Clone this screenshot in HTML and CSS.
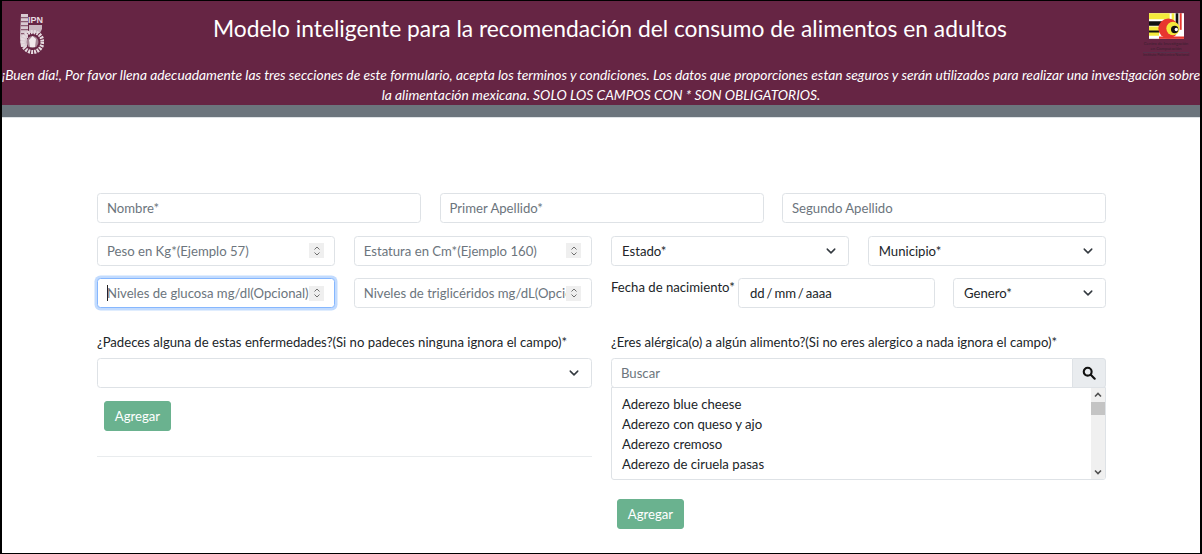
FILE: index.html
```html
<!DOCTYPE html>
<html lang="es">
<head>
<meta charset="utf-8">
<title>Modelo inteligente</title>
<link rel="stylesheet" href="styles.css">
</head>
<body>
<div class="frame">
  <header class="hero">
    <div class="hero-top">
      <svg class="logo-ipn" viewBox="0 0 26 41" aria-hidden="true">
        <path d="M3 1h7v24H2zM2 25h7v9H3z" fill="#d9cbd2"/>
        <path d="M3 4h7v1.200H3zM3 8h7v1.200H3zM3 12h7v1.200H3zM3 16h7v1.200H3zM3 20h7v1.200H3z" fill="#8a5c72"/>
        <text class="ipn-text" x="17.500" y="10">IPN</text>
        <path d="M11 12h13v4l-2 4H11z" fill="#c9b5bf"/>
        <circle cx="14.500" cy="29" r="10" fill="none" stroke="#e6dbe0" stroke-width="4" stroke-dasharray="2 1"/>
        <circle cx="14.500" cy="29" r="6" fill="#a58494"/>
        <path d="M11 27l3.500-4 3.500 3-1 8h-5z" fill="#f1e9ec"/>
      </svg>
      <h1 class="title">Modelo inteligente para la recomendación del consumo de alimentos en adultos</h1>
      <div class="logo-cic">
        <svg class="logo-cic-mark" viewBox="0 0 105 77" aria-hidden="true">
          <rect width="105" height="77" fill="#fff"/>
          <path d="M0 0h62v18H0zM0 40h30v28H0zM68 0h8v30h-8z" fill="#f4ea3c"/>
          <path d="M0 24h40v14H0zM0 52h30v6H0zM80 0h8v40h-8z" fill="#111"/>
          <path d="M92 0h6v50h-6z" fill="#e8372f"/>
          <path d="M30 70h75v7H30z" fill="#e8372f"/>
          <circle cx="58" cy="46" r="30" fill="#e8372f"/>
          <circle cx="72" cy="46" r="20" fill="#f4ea3c"/>
          <circle cx="77" cy="49" r="11" fill="#111"/>
          <circle cx="82" cy="49" r="5" fill="#fff"/>
        </svg>
        <span class="logo-cic-text">Centro de Investigación<br>en Computación</span>
        <span class="logo-cic-sub">Instituto Politécnico Nacional</span>
      </div>
    </div>
    <p class="intro">¡Buen día!, Por favor llena adecuadamente las tres secciones de este formulario, acepta los terminos y condiciones. Los datos que proporciones estan seguros y serán utilizados para realizar una investigación sobre<br>la alimentación mexicana. SOLO LOS CAMPOS CON * SON OBLIGATORIOS.</p>
  </header>
  <div class="band"></div>
  <main class="form">
    <div class="row row-three">
      <div class="field"><span class="ph">Nombre*</span></div>
      <div class="field"><span class="ph">Primer Apellido*</span></div>
      <div class="field"><span class="ph">Segundo Apellido</span></div>
    </div>
    <div class="row row-halves">
      <div class="pair">
        <div class="field number"><span class="ph">Peso en Kg*(Ejemplo 57)</span><span class="spin"><svg viewBox="0 0 8 12"><path d="M1.500 4.500 4 2l2.500 2.500M1.500 7.500 4 10l2.500-2.500"/></svg></span></div>
        <div class="field number"><span class="ph">Estatura en Cm*(Ejemplo 160)</span><span class="spin"><svg viewBox="0 0 8 12"><path d="M1.500 4.500 4 2l2.500 2.500M1.500 7.500 4 10l2.500-2.500"/></svg></span></div>
      </div>
      <div class="pair">
        <div class="field select"><span class="val">Estado*</span><svg class="chev" viewBox="0 0 16 16"><path d="m2 5 6 6 6-6"/></svg></div>
        <div class="field select"><span class="val">Municipio*</span><svg class="chev" viewBox="0 0 16 16"><path d="m2 5 6 6 6-6"/></svg></div>
      </div>
    </div>
    <div class="row row-halves">
      <div class="pair">
        <div class="field number focus"><span class="caret"></span><span class="ph">Niveles de glucosa mg/dl(Opcional)</span><span class="spin"><svg viewBox="0 0 8 12"><path d="M1.500 4.500 4 2l2.500 2.500M1.500 7.500 4 10l2.500-2.500"/></svg></span></div>
        <div class="field number"><span class="ph">Niveles de triglicéridos mg/dL(Opcional)</span><span class="spin"><svg viewBox="0 0 8 12"><path d="M1.500 4.500 4 2l2.500 2.500M1.500 7.500 4 10l2.500-2.500"/></svg></span></div>
      </div>
      <div class="birth-row">
        <span class="birth-label">Fecha de nacimiento*</span>
        <div class="field date"><span class="val">dd / mm / aaaa</span></div>
        <div class="field select gender"><span class="val">Genero*</span><svg class="chev" viewBox="0 0 16 16"><path d="m2 5 6 6 6-6"/></svg></div>
      </div>
    </div>
    <div class="row-halves lower">
      <section class="col">
        <label class="lbl">¿Padeces alguna de estas enfermedades?(Si no padeces ninguna ignora el campo)*</label>
        <div class="field select"><span class="val"></span><svg class="chev" viewBox="0 0 16 16"><path d="m2 5 6 6 6-6"/></svg></div>
        <button class="btn btn-left" type="button">Agregar</button>
        <hr class="rule">
      </section>
      <section class="col">
        <label class="lbl">¿Eres alérgica(o) a algún alimento?(Si no eres alergico a nada ignora el campo)*</label>
        <div class="search">
          <div class="field search-input"><span class="ph">Buscar</span></div>
          <span class="search-btn"><svg viewBox="0 0 16 16"><circle cx="6.500" cy="6.500" r="4.500"/><path d="m10 10 4.500 4.500"/></svg></span>
        </div>
        <div class="listbox">
          <ul class="options">
            <li>Aderezo blue cheese</li>
            <li>Aderezo con queso y ajo</li>
            <li>Aderezo cremoso</li>
            <li>Aderezo de ciruela pasas</li>
          </ul>
          <div class="scroll">
            <svg class="arrow" viewBox="0 0 10 8"><path d="m2 5.500 3-3 3 3"/></svg>
            <span class="thumb"></span>
            <svg class="arrow arrow-down" viewBox="0 0 10 8"><path d="m2 2.500 3 3 3-3"/></svg>
          </div>
        </div>
        <button class="btn btn-right" type="button">Agregar</button>
      </section>
    </div>
  </main>
</div>
</body>
</html>
```
FILE: styles.css
```css
* { box-sizing: border-box; }
html, body { margin: 0; padding: 0; }
body { font-family: Lato, "Noto Sans", sans-serif; color: #212529; background: #fff; overflow: hidden; }
.frame { width: 1202px; height: 554px; border: 1px solid #000; border-left-width: 2px; border-right-width: 2px; overflow: hidden; background: #fff; }
.hero { height: 104px; background: #662544; color: #fff; display: flex; flex-direction: column; align-items: center; }
.hero-top { width: 100%; height: 64px; display: flex; align-items: flex-start; justify-content: space-between; padding: 12px 8px 0 16px; }
.logo-ipn { width: 26px; height: 41px; flex: none; }
.ipn-text { font-family: "Liberation Sans", sans-serif; font-size: 9px; font-weight: 700; fill: #e6dbe0; text-anchor: middle; }
.title { flex: 1; margin: 0; padding-left: 36px; text-align: center; font-size: 22.800px; font-weight: 400; line-height: 30px; white-space: nowrap; }
.logo-cic { width: 52px; flex: none; display: flex; flex-direction: column; align-items: center; color: #3a2030; }
.logo-cic-mark { width: 35px; height: 26px; flex: none; }
.logo-cic-text { font-size: 4.300px; line-height: 5px; text-align: center; white-space: nowrap; margin-top: 2px; }
.logo-cic-sub { font-size: 3.600px; line-height: 4px; white-space: nowrap; margin-top: 1px; border-top: 1px solid #55304a; }
.intro { margin: 0; width: max-content; flex: none; text-align: center; white-space: nowrap; font-style: italic; font-size: 13.800px; line-height: 19.500px; }
.band { height: 13px; background: #6c757d; border-bottom: 1px solid #dee2e6; }
.form { padding: 75px 94px 0 95px; font-size: 13.150px; }
.row { margin-bottom: 12.500px; }
.row-three { display: grid; grid-template-columns: repeat(3, 1fr); column-gap: 18.500px; }
.row-halves { display: grid; grid-template-columns: repeat(2, 1fr); column-gap: 19px; }
.pair { display: grid; grid-template-columns: repeat(2, 1fr); column-gap: 18.500px; }
.field { height: 30px; border: 1px solid #dee2e6; border-radius: 3.500px; background: #fff; display: flex; align-items: center; padding: 0 10px 0 9px; white-space: nowrap; overflow: hidden; position: relative; min-width: 0; }
.ph { color: #6c757d; flex: 1; overflow: hidden; min-width: 0; }
.val { color: #212529; flex: 1; }
.select { padding: 0 12px 0 10px; }
.spin { width: 15px; height: 15px; flex: none; background: #efefef; display: flex; align-items: center; justify-content: center; }
.spin svg { width: 8px; height: 12px; fill: none; stroke: #6f6f6f; stroke-width: 1; }
.focus { border-color: #86b7fe; box-shadow: 0 0 0 2.500px rgba(13, 110, 253, .25); overflow: visible; }
.caret { width: 1px; height: 16px; background: #222; flex: none; margin-right: -1px; }
.chev { width: 10px; height: 10px; flex: none; fill: none; stroke: #343a40; stroke-width: 2.400; stroke-linecap: round; stroke-linejoin: round; }
.birth-row { display: flex; align-items: flex-start; }
.birth-label { flex: none; width: 127px; white-space: nowrap; line-height: 18px; }
.date { width: 197px; flex: none; padding-left: 11px; word-spacing: -1.500px; }
.gender { width: 153px; flex: none; margin-left: 18px; }
.lower { margin-top: 24.500px; }
.col { min-width: 0; }
.lbl { display: block; line-height: 19px; height: 25px; white-space: nowrap; }
.btn { display: block; height: 30px; width: 67px; border: 1px solid #6ab28f; border-radius: 3px; background: #6ab28f; color: #fff; font: inherit; padding: 0; }
.btn-left { margin: 13px 0 0 7px; }
.btn-right { margin: 19px 0 0 6px; }
.rule { border: 0; border-top: 1px solid #e9ecee; margin: 25px 0 0; }
.search { display: flex; height: 30px; }
.search-input { flex: 1; border-radius: 3.500px 0 0 3.500px; }
.search-btn { width: 33px; flex: none; background: #e9ecef; border: 1px solid #dee2e6; border-left: 0; border-radius: 0 3.500px 3.500px 0; display: flex; align-items: center; justify-content: center; }
.search-btn svg { width: 14px; height: 14px; fill: none; stroke: #111; stroke-width: 2.400; stroke-linecap: round; }
.listbox { height: 93px; margin-top: -1px; border: 1px solid #dee2e6; border-radius: 0 0 3px 3px; display: flex; overflow: hidden; }
.options { list-style: none; margin: 0; padding: 6px 10px 0; flex: 1; min-width: 0; }
.options li { height: 20.200px; line-height: 20px; color: #212529; }
.scroll { width: 14px; flex: none; background: #f0f0f0; display: flex; flex-direction: column; align-items: center; }
.arrow { width: 10px; height: 8px; margin: 3px 0; fill: none; stroke: #505050; stroke-width: 1.600; flex: none; }
.arrow-down { margin-top: auto; }
.thumb { width: 14px; height: 13px; background: #c4c4c4; flex: none; }
```
